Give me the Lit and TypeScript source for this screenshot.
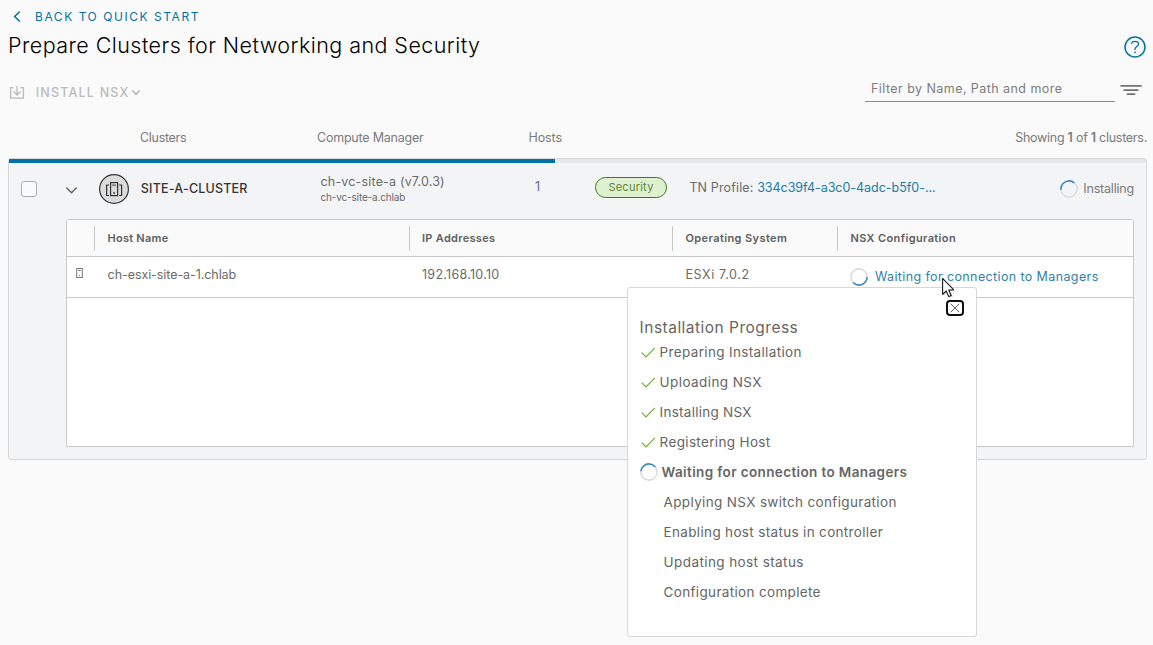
import { LitElement, html, css, svg, nothing } from "lit";
import { customElement, property } from "lit/decorators.js";

type StepState = "done" | "active" | "pending";

interface Step {
  label: string;
  state: StepState;
}

const STEPS: Step[] = [
  { label: "Preparing Installation", state: "done" },
  { label: "Uploading NSX", state: "done" },
  { label: "Installing NSX", state: "done" },
  { label: "Registering Host", state: "done" },
  { label: "Waiting for connection to Managers", state: "active" },
  { label: "Applying NSX switch configuration", state: "pending" },
  { label: "Enabling host status in controller", state: "pending" },
  { label: "Updating host status", state: "pending" },
  { label: "Configuration complete", state: "pending" },
];

/** Ring spinner; `turn` is the angle in degrees at which the arc starts. */
@customElement("ring-spinner")
export class RingSpinner extends LitElement {
  @property({ type: Number }) turn = 180;
  @property({ type: Number }) sweep = 130;

  static styles = css`
    :host {
      display: block;
      width: 18px;
      height: 18px;
    }
    svg {
      display: block;
    }
  `;

  render() {
    const len = (this.sweep / 360) * 2 * Math.PI * 8.1;
    return html`<svg width="18" height="18" viewBox="0 0 18 18" fill="none" stroke-width="1.6">
      <circle cx="9" cy="9" r="8.1" stroke="#dcdcdc"></circle>
      <circle
        cx="9"
        cy="9"
        r="8.1"
        stroke="#3d8fbd"
        stroke-dasharray="${len} 100"
        transform="rotate(${this.turn} 9 9)"
      ></circle>
    </svg>`;
  }
}

@customElement("install-progress")
export class InstallProgress extends LitElement {
  static styles = css`
    :host {
      display: block;
      box-sizing: border-box;
      width: 350px;
      height: 350px;
      padding: 12px 12px 11px 11.6px;
      background: #fff;
      border: 1px solid #d7d7d7;
      border-radius: 3px;
      color: #656565;
      font: 400 13.5px/30px Inter, sans-serif;
      white-space: nowrap;
    }
    .top {
      display: flex;
      justify-content: flex-end;
      height: 17px;
    }
    .close {
      box-sizing: border-box;
      width: 18px;
      height: 16px;
      border: 2px solid #111;
      border-radius: 4px;
      padding: 0;
      background: #fff;
      display: grid;
      place-items: center;
    }
    .title {
      line-height: 20px;
      font-size: 15.5px;
      letter-spacing: 0.486px;
      height: 20px;
    }
    ul {
      list-style: none;
      margin: 0;
      padding: 0;
    }
    li {
      display: flex;
      align-items: center;
      height: 30px;
      letter-spacing: 0.345px;
    }
    .mark {
      width: 20px;
      display: flex;
    }
    .active .mark {
      width: 22px;
    }
    .pending .mark {
      width: 24px;
    }
    .active {
      font-weight: 600;
      letter-spacing: 0.375px;
    }
    li:nth-child(2) {
      letter-spacing: 0.42px;
    }
    li:nth-child(3) {
      letter-spacing: 0.26px;
    }
    li:nth-child(8) {
      letter-spacing: 0.41px;
    }
    li:nth-child(7),
    li:nth-child(9) {
      letter-spacing: 0.333px;
    }
    .head {
      padding-top: 0.5px;
      height: 20px;
      box-sizing: border-box;
    }
  `;

  private mark(state: StepState) {
    if (state === "active") return html`<ring-spinner turn="185" sweep="135"></ring-spinner>`;
    if (state === "done")
      return html`<svg width="16" height="14" viewBox="0 0 16 14" fill="none">
        <path d="M2 7.9 L6 12 L14.4 3.3" stroke="#6fae35" stroke-width="1.2" stroke-linecap="round"></path>
      </svg>`;
    return nothing;
  }

  render() {
    return html`
      <div class="top">
        <button class="close" aria-label="Close">
          <svg width="10" height="10" viewBox="0 0 10 10">
            <path d="M.8 .8 L9.2 9.2 M9.2 .8 L.8 9.2" stroke="#666" stroke-width="1" fill="none"></path>
          </svg>
        </button>
      </div>
      <div class="head"><div class="title">Installation Progress</div></div>
      <ul>
        ${STEPS.map((s) => html`<li class=${s.state}><span class="mark">${this.mark(s.state)}</span>${s.label}</li>`)}
      </ul>
    `;
  }
}

const chevron = (w: number, h: number, color: string, stroke: number) => html`<svg
  width=${w}
  height=${h}
  viewBox="0 0 10 6"
  fill="none"
>
  ${svg`<path d="M.7 .7 L5 5.1 L9.3 .7" stroke=${color} stroke-width=${stroke} stroke-linecap="round" stroke-linejoin="round"></path>`}
</svg>`;

@customElement("app-root")
export class AppRoot extends LitElement {
  static styles = css`
    :host {
      display: block;
      position: relative;
      box-sizing: border-box;
      width: 1153px;
      height: 645px;
      overflow: hidden;
      background: #fafafa;
      color: #6a6a6a;
      font: 400 12.5px/18px Inter, sans-serif;
      white-space: nowrap;
    }
    * {
      box-sizing: border-box;
    }
    svg {
      display: block;
    }
    .back {
      display: flex;
      align-items: center;
      height: 33px;
      padding-left: 13px;
      color: #0072a3;
      font-size: 12px;
      letter-spacing: 1.55px;
    }
    .back svg {
      margin-right: 14px;
    }
    .titlebar {
      display: flex;
      justify-content: space-between;
      align-items: center;
      height: 25px;
      padding: 0 7px 0 8px;
    }
    h1 {
      margin: 0;
      color: #000;
      font-weight: 300;
      font-size: 21.5px;
      line-height: 25px;
      letter-spacing: 0.441px;
    }
    .help {
      margin-top: 3px;
    }
    .toolbar {
      display: flex;
      justify-content: space-between;
      height: 44px;
      padding: 18px 11px 0 9px;
    }
    .install {
      display: flex;
      align-items: center;
      height: 34px;
      color: #bababa;
      font-weight: 500;
      letter-spacing: 1.2px;
    }
    .install .dl {
      margin-right: 10.7px;
    }
    .install .caret {
      margin: 0 0 1px 3px;
    }
    .search {
      display: flex;
      gap: 5px;
    }
    .input {
      width: 250px;
      height: 26px;
      border-bottom: 1px solid #8c8c8c;
      padding: 4px 0 0 6px;
      color: #7c7c7c;
      letter-spacing: 0.44px;
    }
    .filter {
      margin-top: 8px;
    }
    .colhead {
      display: grid;
      grid-template-columns: 177px 211.5px 1fr auto;
      align-items: center;
      height: 56px;
      padding: 15px 6px 0 140px;
      color: #7a7a7a;
    }
    .c1 {
      letter-spacing: -0.301px;
    }
    .c2 {
      letter-spacing: -0.219px;
    }
    .c3 {
      letter-spacing: -0.1px;
    }
    .c4 {
      letter-spacing: -0.263px;
    }
    .c4 b {
      font-weight: 600;
    }
    .card {
      width: 1139px;
      height: 302px;
      margin-left: 8px;
      background: #f3f4f6;
      border: 1px solid #d7d7d7;
      border-radius: 3px;
    }
    .bar {
      height: 4px;
      background: #e8e8e8;
    }
    .bar div {
      width: 48.02%;
      height: 4px;
      background: #0072a3;
    }
    .cluster {
      display: grid;
      grid-template-columns: 43px 35px 41px 180px 215px 60px 94px 1fr auto;
      align-items: center;
      height: 56px;
      padding: 0 12px;
    }
    .box {
      width: 16px;
      height: 16px;
      margin-top: -4px;
      border: 1px solid #adadad;
      border-radius: 3px;
      background: #fafafa;
    }
    .caretcell {
      padding: 0 0 2px 1.5px;
    }
    .iconcell {
      padding-bottom: 4px;
    }
    .name {
      color: #333;
      font-weight: 500;
      letter-spacing: 0.191px;
      padding: 0 0 4px 0.8px;
    }
    .mgr {
      line-height: 15.5px;
      padding: 0 0 3px 0.5px;
      letter-spacing: 0.177px;
    }
    .mgr small {
      display: block;
      font-size: 10px;
      letter-spacing: -0.16px;
    }
    .num {
      color: #56699a;
      padding-bottom: 8px;
    }
    .badge {
      width: 72px;
      height: 21px;
      margin-bottom: 7px;
      border: 1px solid #3c7d12;
      border-radius: 11px;
      background: #dff0d0;
      color: #5a8739;
      font-size: 11px;
      line-height: 19px;
      text-align: center;
      letter-spacing: 0.25px;
    }
    .tn {
      padding: 0 0 7px 0.4px;
      letter-spacing: 0.14px;
    }
    .link {
      color: #1a7cab;
      letter-spacing: -0.03px;
    }
    .installing {
      display: flex;
      align-items: center;
      gap: 5.5px;
      padding-bottom: 4px;
      color: #7a7a7a;
      letter-spacing: -0.2px;
    }
    .grid {
      width: 1068px;
      height: 228px;
      margin-left: 57px;
      border: 1px solid #c8c8c8;
      border-radius: 3px 3px 0 0;
      background: #fff;
    }
    .gr {
      display: grid;
      grid-template-columns: 28px 315px 263px 165px 1fr;
      align-items: center;
      border-bottom: 1px solid #c8c8c8;
    }
    .gh {
      height: 37px;
      background: #fafafa;
      color: #5e5e5e;
      font-weight: 600;
      font-size: 11px;
      letter-spacing: 0.4px;
    }
    .gh > div {
      height: 25px;
      line-height: 25px;
      padding-left: 12.5px;
      border-right: 1px solid #c8c8c8;
    }
    .gh > div:nth-child(2) {
      letter-spacing: 0.25px;
    }
    .gh > div:nth-child(3) {
      letter-spacing: 0.3px;
      padding-left: 12px;
    }
    .gh > div:last-child {
      border-right: 0;
      letter-spacing: 0.37px;
    }
    .gb {
      height: 41px;
      padding-bottom: 5px;
    }
    .gb > div {
      padding-left: 12px;
    }
    .gb > .hosticon {
      padding: 0 0 3px 9px;
    }
    .gb > .host {
      padding-left: 12.6px;
      letter-spacing: -0.07px;
    }
    .ip {
      letter-spacing: 0.27px;
    }
    .gb > .os {
      padding-left: 12.4px;
      letter-spacing: 0.63px;
    }
    .wait {
      display: flex;
      align-items: center;
      gap: 7px;
      padding-top: 4px;
      color: #2f7fac;
      letter-spacing: 0.38px;
    }
    .popover {
      position: absolute;
      left: 627px;
      top: 287px;
    }
    .cursor {
      position: absolute;
      left: 941px;
      top: 277px;
    }
  `;

  render() {
    return html`
      <div class="back">
        <svg width="8" height="11" viewBox="0 0 8 11" fill="none">
          <path d="M6.3 1 L1.6 5.5 L6.3 10" stroke="#0072a3" stroke-width="1.5" stroke-linecap="round"></path>
        </svg>
        BACK TO QUICK START
      </div>
      <div class="titlebar">
        <h1>Prepare Clusters for Networking and Security</h1>
        <svg class="help" width="22" height="22" viewBox="0 0 22 22" fill="none" stroke="#0072a3">
          <circle cx="11" cy="11" r="10" stroke-width="1.5"></circle>
          <path
            d="M7.6 7.3 C8.2 5.9 9.5 5.3 11 5.3 C13.1 5.3 14.5 6.4 14.5 8.1 C14.5 10.4 11 10.6 11 12.9 V13.6"
            stroke-width="1.3"
            stroke-linecap="round"
          ></path>
          <circle cx="11" cy="16.3" r=".9" fill="#0072a3" stroke="none"></circle>
        </svg>
      </div>
      <div class="toolbar">
        <div class="install">
          <svg class="dl" width="16" height="14" viewBox="0 0 16 14" fill="none" stroke="#bababa" stroke-width="1.3">
            <path d="M4.4 1.7 H1.6 V12.2 H14.4 V1.7 H11.6"></path>
            <path d="M8 .3 V8.8 M4.8 5.8 L8 9 L11.2 5.8" stroke-linecap="round"></path>
          </svg>
          INSTALL NSX<span class="caret">${chevron(8, 5, "#a8a8a8", 1.6)}</span>
        </div>
        <div class="search">
          <div class="input">Filter by Name, Path and more</div>
          <svg class="filter" width="22" height="12" viewBox="0 0 22 12" stroke="#737373" stroke-width="1.8">
            <path d="M1.2 1.9 H21 M4.2 6.1 H17.8 M7.4 10.1 H14.6" stroke-linecap="round"></path>
          </svg>
        </div>
      </div>
      <div class="colhead">
        <div class="c1">Clusters</div>
        <div class="c2">Compute Manager</div>
        <div class="c3">Hosts</div>
        <div class="c4">Showing <b>1</b> of <b>1</b> clusters.</div>
      </div>
      <div class="card">
        <div class="bar"><div></div></div>
        <div class="cluster">
          <div class="box"></div>
          <div class="caretcell">${chevron(11, 7, "#666", 1.3)}</div>
          <div class="iconcell">
            <svg width="30" height="30" viewBox="0 0 30 30" fill="none" stroke="#333" stroke-width="1.2">
              <circle cx="15" cy="15" r="14.4" fill="#dcdcdc"></circle>
              <rect x="11.6" y="8.6" width="7" height="13"></rect>
              <path d="M10 11 H7.6 V21.5 H10 M20.2 11 H22.6 V21.5 H20.2"></path>
              <path d="M13 11.2 H17.2" stroke="#8a8a8a" stroke-width="2"></path>
              <path d="M14.3 19 H16" stroke-width="1.6"></path>
            </svg>
          </div>
          <div class="name">SITE-A-CLUSTER</div>
          <div class="mgr">ch-vc-site-a (v7.0.3)<small>ch-vc-site-a.chlab</small></div>
          <div class="num">1</div>
          <div class="badge">Security</div>
          <div class="tn">TN Profile: <span class="link">334c39f4-a3c0-4adc-b5f0-...</span></div>
          <div class="installing"><ring-spinner turn="175" sweep="135"></ring-spinner>Installing</div>
        </div>
        <div class="grid">
          <div class="gr gh">
            <div></div>
            <div>Host Name</div>
            <div>IP Addresses</div>
            <div>Operating System</div>
            <div>NSX Configuration</div>
          </div>
          <div class="gr gb">
            <div class="hosticon">
              <svg width="7" height="10" viewBox="0 0 7 10" fill="none" stroke="#777" stroke-width="1">
                <rect x=".7" y=".5" width="5.6" height="9"></rect>
                <path d="M2.2 2.5 H4.8 M3 7.5 H4"></path>
              </svg>
            </div>
            <div class="host">ch-esxi-site-a-1.chlab</div>
            <div class="ip">192.168.10.10</div>
            <div class="os">ESXi 7.0.2</div>
            <div class="wait">
              <ring-spinner turn="0" sweep="135"></ring-spinner>Waiting for connection to Managers
            </div>
          </div>
        </div>
      </div>
      <install-progress class="popover"></install-progress>
      <svg class="cursor" width="16" height="22" viewBox="0 0 16 22">
        <path d="M2.6 3 V18.6 L6 15.4 L8.6 21 L11.6 19.7 L9.2 14.3 L13.8 13.9 Z" fill="#000" opacity=".18"></path>
        <path
          d="M1.6 1.4 V17.4 L5.2 14 L7.7 19.6 L10.2 18.5 L7.8 13.1 L12.6 12.7 Z"
          fill="#fff"
          stroke="#1d1420"
          stroke-width="1.1"
          stroke-linejoin="round"
        ></path>
      </svg>
    `;
  }
}
